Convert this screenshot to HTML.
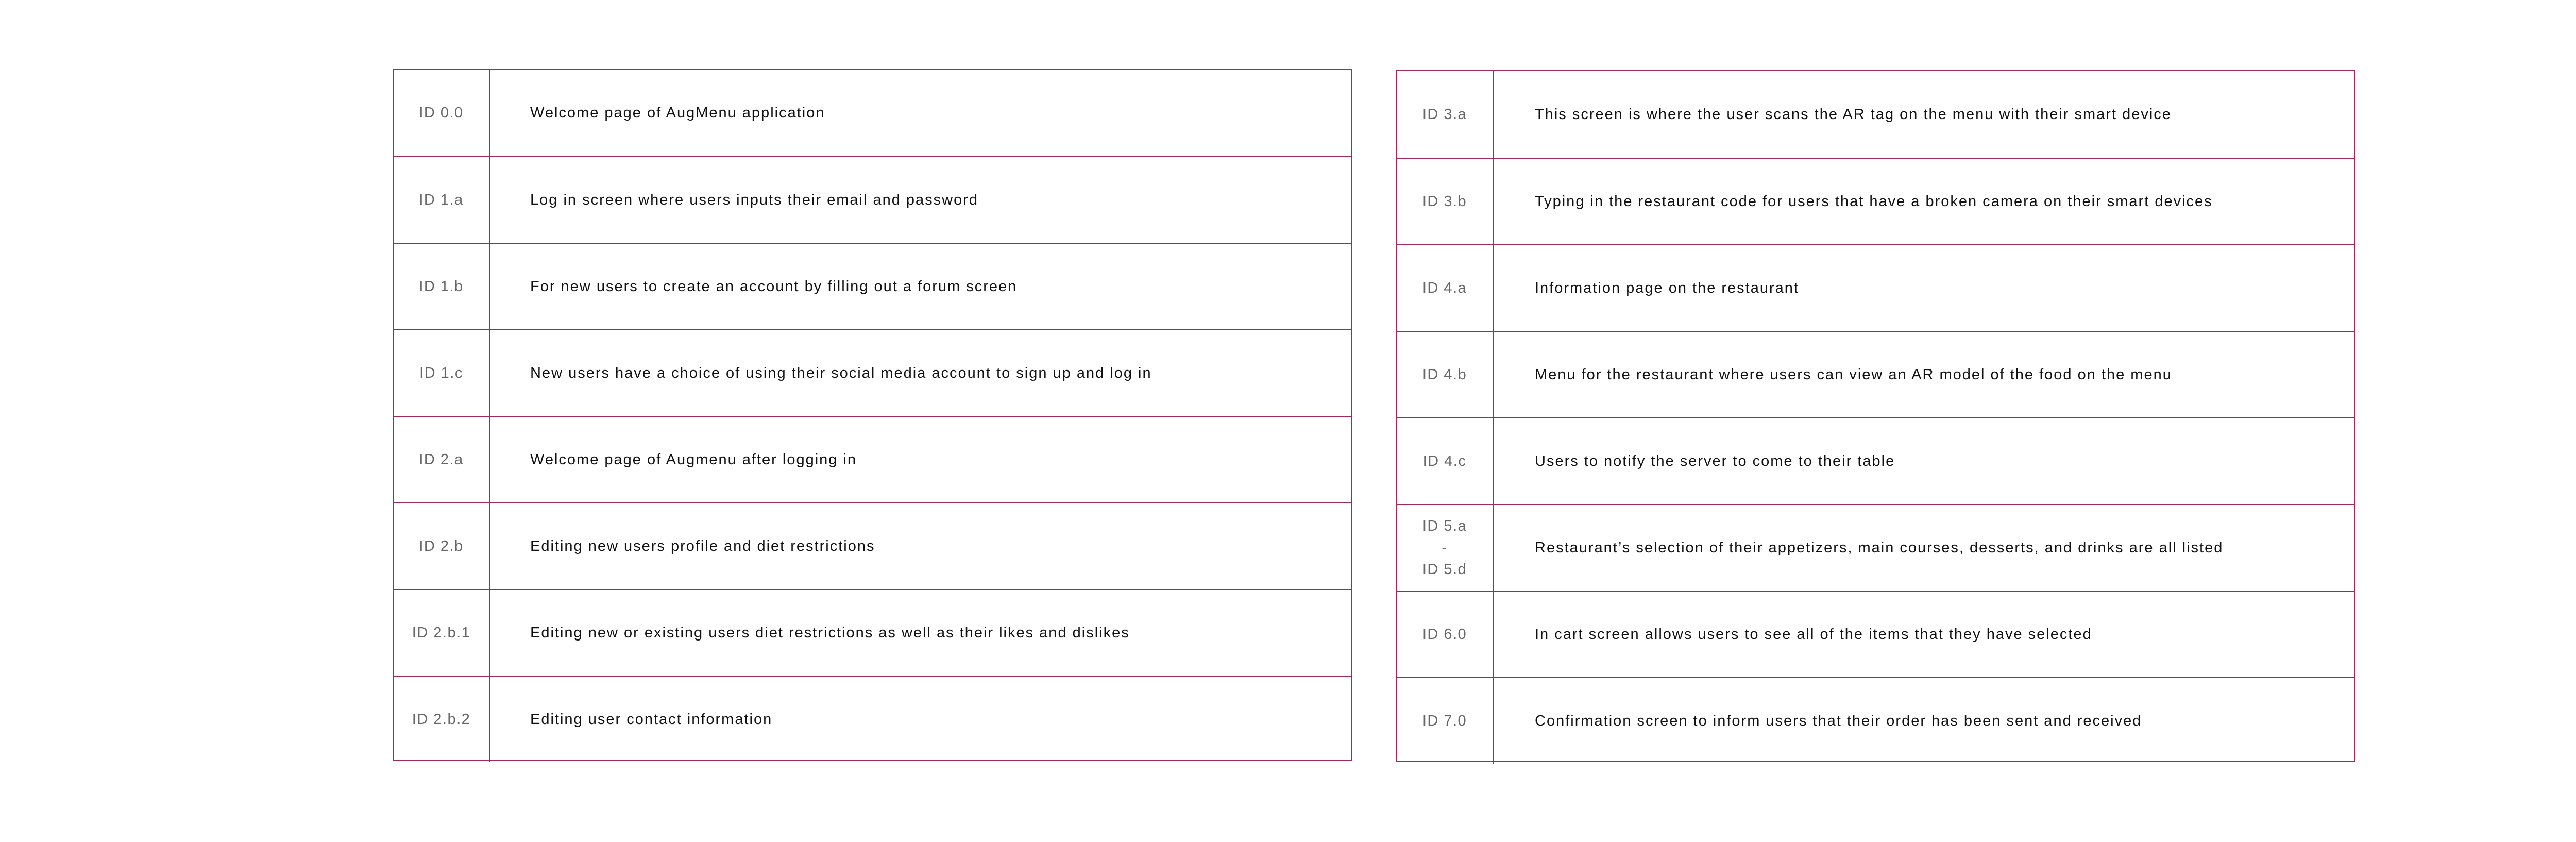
<!DOCTYPE html><html><head><style>
body{margin:0;width:5334px;height:1634px;background:#fff;position:relative;overflow:hidden;font-family:"Liberation Sans",sans-serif}
.t{position:absolute;border:2px solid #a3285a;box-sizing:border-box}
.r{position:absolute;left:0;right:0;border-top:2px solid #a3285a;box-sizing:border-box;height:168px}
.r:first-child{border-top:none}
.id{position:absolute;top:0;height:100%;display:flex;align-items:center;justify-content:center;text-align:center;color:#666;font-size:29px;line-height:42px;letter-spacing:1.5px;border-right:2px solid #a3285a;box-sizing:border-box;white-space:nowrap}
.tx{position:absolute;top:0;height:100%;display:flex;align-items:center;color:#111;font-size:29px;letter-spacing:2px;white-space:nowrap}
</style></head><body>
<div class="t" style="left:762px;top:133px;width:1862px;height:1344px">
<div class="r" style="top:0"><div class="id" style="left:0;width:187px">ID 0.0</div><div class="tx" style="left:265px">Welcome page of AugMenu application</div></div>
<div class="r" style="top:168px"><div class="id" style="left:0;width:187px">ID 1.a</div><div class="tx" style="left:265px">Log in screen where users inputs their email and password</div></div>
<div class="r" style="top:336px"><div class="id" style="left:0;width:187px">ID 1.b</div><div class="tx" style="left:265px">For new users to create an account by filling out a forum screen</div></div>
<div class="r" style="top:504px"><div class="id" style="left:0;width:187px">ID 1.c</div><div class="tx" style="left:265px">New users have a choice of using their social media account to sign up and log in</div></div>
<div class="r" style="top:672px"><div class="id" style="left:0;width:187px">ID 2.a</div><div class="tx" style="left:265px">Welcome page of Augmenu after logging in</div></div>
<div class="r" style="top:840px"><div class="id" style="left:0;width:187px">ID 2.b</div><div class="tx" style="left:265px">Editing new users profile and diet restrictions</div></div>
<div class="r" style="top:1008px"><div class="id" style="left:0;width:187px">ID 2.b.1</div><div class="tx" style="left:265px">Editing new or existing users diet restrictions as well as their likes and dislikes</div></div>
<div class="r" style="top:1176px"><div class="id" style="left:0;width:187px">ID 2.b.2</div><div class="tx" style="left:265px">Editing user contact information</div></div>
</div>
<div class="t" style="left:2709px;top:136px;width:1863px;height:1342px">
<div class="r" style="top:0"><div class="id" style="left:0;width:188px">ID 3.a</div><div class="tx" style="left:268px">This screen is where the user scans the AR tag on the menu with their smart device</div></div>
<div class="r" style="top:168px"><div class="id" style="left:0;width:188px">ID 3.b</div><div class="tx" style="left:268px">Typing in the restaurant code for users that have a broken camera on their smart devices</div></div>
<div class="r" style="top:336px"><div class="id" style="left:0;width:188px">ID 4.a</div><div class="tx" style="left:268px">Information page on the restaurant</div></div>
<div class="r" style="top:504px"><div class="id" style="left:0;width:188px">ID 4.b</div><div class="tx" style="left:268px">Menu for the restaurant where users can view an AR model of the food on the menu</div></div>
<div class="r" style="top:672px"><div class="id" style="left:0;width:188px">ID 4.c</div><div class="tx" style="left:268px">Users to notify the server to come to their table</div></div>
<div class="r" style="top:840px"><div class="id" style="left:0;width:188px">ID 5.a<br>-<br>ID 5.d</div><div class="tx" style="left:268px">Restaurant’s selection of their appetizers, main courses, desserts, and drinks are all listed</div></div>
<div class="r" style="top:1008px"><div class="id" style="left:0;width:188px">ID 6.0</div><div class="tx" style="left:268px">In cart screen allows users to see all of the items that they have selected</div></div>
<div class="r" style="top:1176px"><div class="id" style="left:0;width:188px">ID 7.0</div><div class="tx" style="left:268px">Confirmation screen to inform users that their order has been sent and received</div></div>
</div>
</body></html>
